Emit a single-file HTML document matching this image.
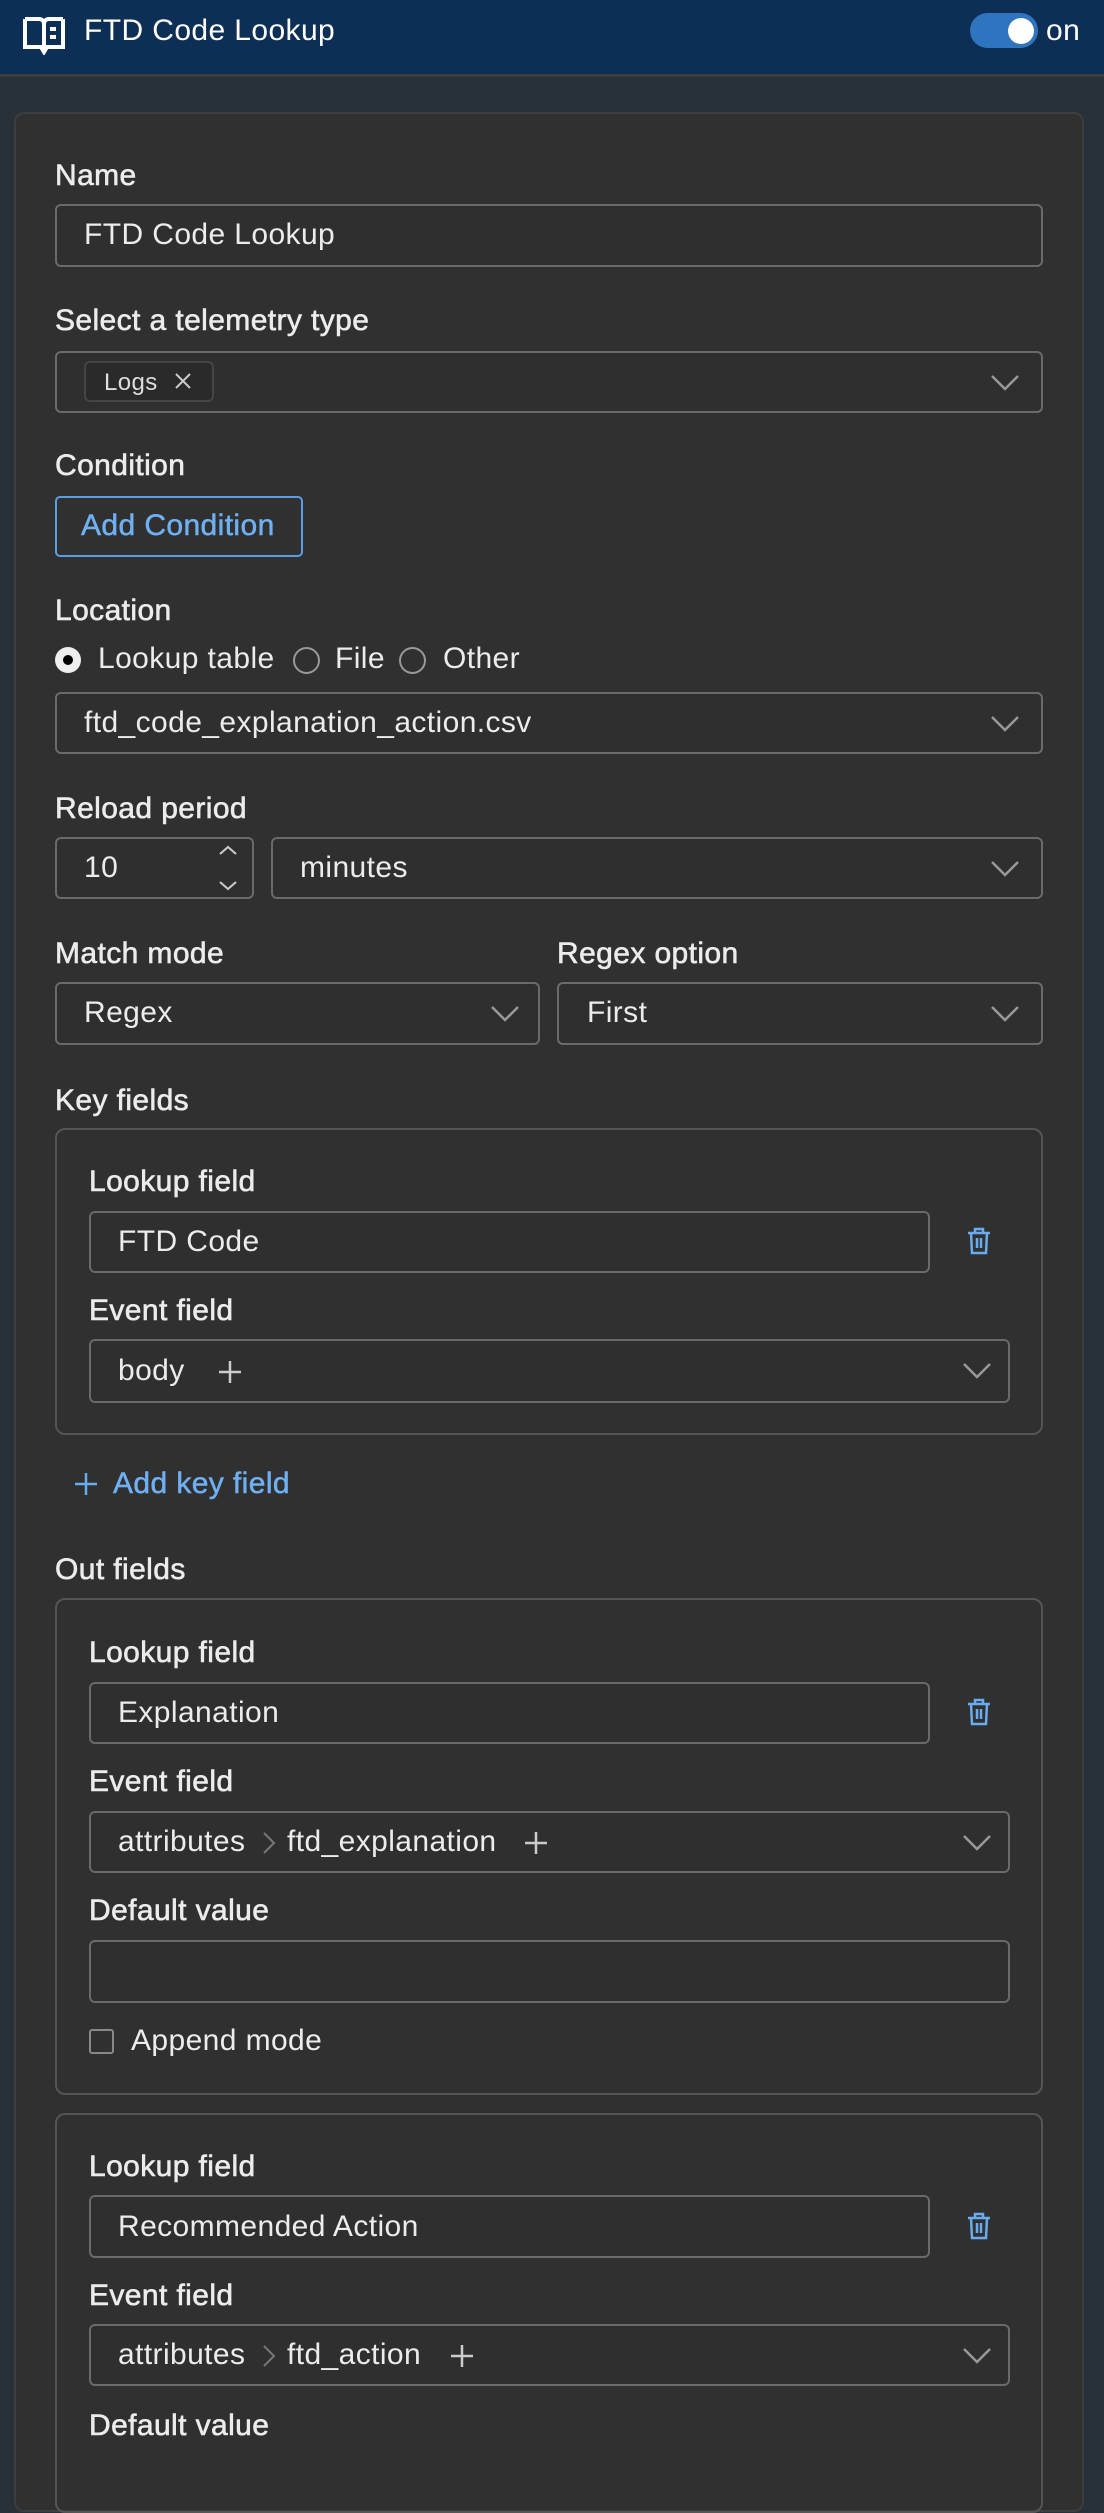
<!DOCTYPE html>
<html><head><meta charset="utf-8"><style>
*{box-sizing:border-box;margin:0;padding:0}
body{width:1104px;height:2444px;background:#283038;font-family:"Liberation Sans",sans-serif;color:#ececec;position:relative;overflow:hidden}
.hdr{position:absolute;left:0;top:0;width:1104px;height:77px;background:#0e2f55;border-bottom:3px solid #3d3d3d}
.panel{position:absolute;left:14px;top:112px;width:1070px;height:2400px;background:#303030;border:2px solid #3e3e3e;border-radius:10px}
.t{position:absolute;font-size:30px;letter-spacing:0.4px;line-height:34px;white-space:nowrap}
.l{-webkit-text-stroke:0.6px #ececec;color:#ececec}
.box{position:absolute;border:2px solid #6a6a6a;border-radius:6px;background:#2f2f2f}
.grp{position:absolute;border:2px solid #555;border-radius:10px}
.chev{position:absolute;width:30px;height:18px}
</style></head><body>
<div class="hdr"></div>
<svg style="position:absolute;left:22px;top:15px" width="44" height="40" viewBox="0 0 44 40" fill="none" stroke="#fff" stroke-width="4"><path d="M3 4h14c3 0 5 2 5 5v25M41 4H27c-3 0-5 2-5 5M3 4v28h16l3 5 3-5h16V4"/><path d="M28 14h6M28 22h6" stroke-width="4"/></svg>
<div class="t" style="left:84px;top:14px;color:#fff">FTD Code Lookup</div>
<div style="position:absolute;left:970px;top:13px;width:68px;height:35px;border-radius:18px;background:#2e74bf"></div>
<div style="position:absolute;left:1008px;top:18px;width:26px;height:26px;border-radius:50%;background:#fff"></div>
<div class="t" style="left:1046px;top:14px;color:#fff">on</div>

<div class="panel"></div>

<div class="t l" style="left:55px;top:159px">Name</div>
<div class="box" style="left:55px;top:204px;width:988px;height:63px"></div>
<div class="t" style="left:84px;top:218px">FTD Code Lookup</div>

<div class="t l" style="left:55px;top:304px">Select a telemetry type</div>
<div class="box" style="left:55px;top:351px;width:988px;height:62px"></div>
<div style="position:absolute;left:84px;top:361px;width:130px;height:41px;border:2px solid #454545;border-radius:6px;background:#2a2a2a"></div>
<div class="t" style="left:104px;top:366px;font-size:24px;color:#ddd">Logs</div>
<svg style="position:absolute;left:174px;top:372px" width="18" height="18" stroke="#ccc" stroke-width="2"><path d="M2 2l14 14M16 2L2 16"/></svg>
<svg class="chev" style="left:990px;top:374px" viewBox="0 0 30 18" fill="none" stroke="#999" stroke-width="2.5"><path d="M2 2l13 13 13-13"/></svg>

<div class="t l" style="left:55px;top:449px">Condition</div>
<div style="position:absolute;left:55px;top:496px;width:248px;height:61px;border:2px solid #5a9fe6;border-radius:5px"></div>
<div class="t" style="left:81px;top:509px;color:#6fb0f2;-webkit-text-stroke:0.5px #6fb0f2">Add Condition</div>

<div class="t l" style="left:55px;top:594px">Location</div>
<div style="position:absolute;left:55px;top:647px;width:26px;height:26px;border-radius:50%;background:#eee"></div>
<div style="position:absolute;left:63px;top:655px;width:10px;height:10px;border-radius:50%;background:#000"></div>
<div class="t" style="left:98px;top:642px">Lookup table</div>
<div style="position:absolute;left:293px;top:647px;width:27px;height:27px;border-radius:50%;border:2px solid #999"></div>
<div class="t" style="left:335px;top:642px">File</div>
<div style="position:absolute;left:399px;top:647px;width:27px;height:27px;border-radius:50%;border:2px solid #999"></div>
<div class="t" style="left:443px;top:642px">Other</div>
<div class="box" style="left:55px;top:692px;width:988px;height:62px"></div>
<div class="t" style="left:84px;top:706px">ftd_code_explanation_action.csv</div>
<svg class="chev" style="left:990px;top:715px" viewBox="0 0 30 18" fill="none" stroke="#999" stroke-width="2.5"><path d="M2 2l13 13 13-13"/></svg>

<div class="t l" style="left:55px;top:792px">Reload period</div>
<div class="box" style="left:55px;top:837px;width:199px;height:62px"></div>
<div class="t" style="left:84px;top:851px">10</div>
<svg style="position:absolute;left:216px;top:843px" width="24" height="50" fill="none" stroke="#ccc" stroke-width="2"><path d="M4 11l8-7 8 7M4 39l8 7 8-7"/></svg>
<div class="box" style="left:271px;top:837px;width:772px;height:62px"></div>
<div class="t" style="left:300px;top:851px">minutes</div>
<svg class="chev" style="left:990px;top:860px" viewBox="0 0 30 18" fill="none" stroke="#999" stroke-width="2.5"><path d="M2 2l13 13 13-13"/></svg>

<div class="t l" style="left:55px;top:937px">Match mode</div>
<div class="t l" style="left:557px;top:937px">Regex option</div>
<div class="box" style="left:55px;top:982px;width:485px;height:63px"></div>
<div class="t" style="left:84px;top:996px">Regex</div>
<svg class="chev" style="left:490px;top:1005px" viewBox="0 0 30 18" fill="none" stroke="#999" stroke-width="2.5"><path d="M2 2l13 13 13-13"/></svg>
<div class="box" style="left:557px;top:982px;width:486px;height:63px"></div>
<div class="t" style="left:587px;top:996px">First</div>
<svg class="chev" style="left:990px;top:1005px" viewBox="0 0 30 18" fill="none" stroke="#999" stroke-width="2.5"><path d="M2 2l13 13 13-13"/></svg>

<div class="t l" style="left:55px;top:1084px">Key fields</div>
<div class="grp" style="left:55px;top:1128px;width:988px;height:307px"></div>
<div class="t l" style="left:89px;top:1165px">Lookup field</div>
<div class="box" style="left:89px;top:1211px;width:841px;height:62px"></div>
<div class="t" style="left:118px;top:1225px">FTD Code</div>
<svg style="position:absolute;left:966px;top:1226px" width="26" height="30" fill="none" stroke="#6aacf0" stroke-width="2.5"><path d="M2 7h22M9 7V3h8v4M5 7l1 20h14l1-20M11 12v10M15 12v10"/></svg>
<div class="t l" style="left:89px;top:1294px">Event field</div>
<div class="box" style="left:89px;top:1339px;width:921px;height:64px"></div>
<div class="t" style="left:118px;top:1354px">body</div>
<svg style="position:absolute;left:218px;top:1360px" width="24" height="24" stroke="#ccc" stroke-width="2.5"><path d="M12 1v22M1 12h22"/></svg>
<svg class="chev" style="left:962px;top:1362px" viewBox="0 0 30 18" fill="none" stroke="#999" stroke-width="2.5"><path d="M2 2l13 13 13-13"/></svg>

<svg style="position:absolute;left:74px;top:1472px" width="24" height="24" stroke="#6aacf0" stroke-width="2.5"><path d="M12 1v22M1 12h22"/></svg>
<div class="t" style="left:113px;top:1467px;color:#6fb0f2;-webkit-text-stroke:0.5px #6fb0f2">Add key field</div>

<div class="t l" style="left:55px;top:1553px">Out fields</div>
<div class="grp" style="left:55px;top:1598px;width:988px;height:497px"></div>
<div class="t l" style="left:89px;top:1636px">Lookup field</div>
<div class="box" style="left:89px;top:1682px;width:841px;height:62px"></div>
<div class="t" style="left:118px;top:1696px">Explanation</div>
<svg style="position:absolute;left:966px;top:1697px" width="26" height="30" fill="none" stroke="#6aacf0" stroke-width="2.5"><path d="M2 7h22M9 7V3h8v4M5 7l1 20h14l1-20M11 12v10M15 12v10"/></svg>
<div class="t l" style="left:89px;top:1765px">Event field</div>
<div class="box" style="left:89px;top:1811px;width:921px;height:62px"></div>
<div class="t" style="left:118px;top:1825px">attributes</div>
<svg style="position:absolute;left:262px;top:1831px" width="14" height="24" fill="none" stroke="#777" stroke-width="2"><path d="M2 2l10 10-10 10"/></svg>
<div class="t" style="left:287px;top:1825px">ftd_explanation</div>
<svg style="position:absolute;left:524px;top:1831px" width="24" height="24" stroke="#ccc" stroke-width="2.5"><path d="M12 1v22M1 12h22"/></svg>
<svg class="chev" style="left:962px;top:1834px" viewBox="0 0 30 18" fill="none" stroke="#999" stroke-width="2.5"><path d="M2 2l13 13 13-13"/></svg>
<div class="t l" style="left:89px;top:1894px">Default value</div>
<div class="box" style="left:89px;top:1940px;width:921px;height:63px"></div>
<div style="position:absolute;left:89px;top:2029px;width:25px;height:25px;border:2px solid #888;border-radius:3px"></div>
<div class="t" style="left:131px;top:2024px">Append mode</div>

<div class="grp" style="left:55px;top:2113px;width:988px;height:400px"></div>
<div class="t l" style="left:89px;top:2150px">Lookup field</div>
<div class="box" style="left:89px;top:2195px;width:841px;height:63px"></div>
<div class="t" style="left:118px;top:2210px">Recommended Action</div>
<svg style="position:absolute;left:966px;top:2211px" width="26" height="30" fill="none" stroke="#6aacf0" stroke-width="2.5"><path d="M2 7h22M9 7V3h8v4M5 7l1 20h14l1-20M11 12v10M15 12v10"/></svg>
<div class="t l" style="left:89px;top:2279px">Event field</div>
<div class="box" style="left:89px;top:2324px;width:921px;height:62px"></div>
<div class="t" style="left:118px;top:2338px">attributes</div>
<svg style="position:absolute;left:262px;top:2344px" width="14" height="24" fill="none" stroke="#777" stroke-width="2"><path d="M2 2l10 10-10 10"/></svg>
<div class="t" style="left:287px;top:2338px">ftd_action</div>
<svg style="position:absolute;left:450px;top:2344px" width="24" height="24" stroke="#ccc" stroke-width="2.5"><path d="M12 1v22M1 12h22"/></svg>
<svg class="chev" style="left:962px;top:2347px" viewBox="0 0 30 18" fill="none" stroke="#999" stroke-width="2.5"><path d="M2 2l13 13 13-13"/></svg>
<div class="t l" style="left:89px;top:2409px">Default value</div>
</body></html>
